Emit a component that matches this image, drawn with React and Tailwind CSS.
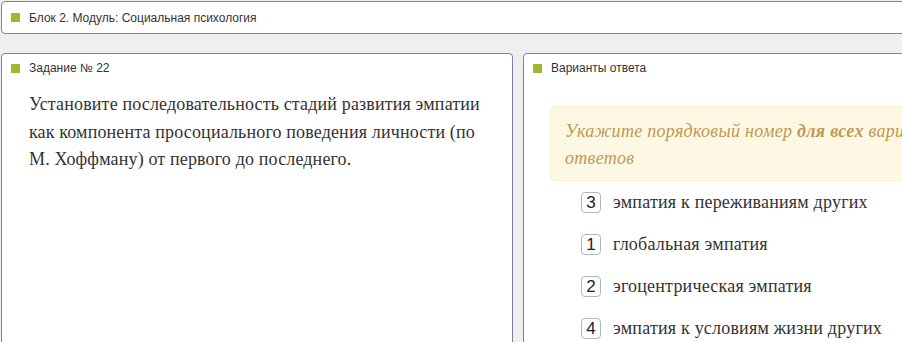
export default function App() {
  const items = [
    ["3", "эмпатия к переживаниям других"],
    ["1", "глобальная эмпатия"],
    ["2", "эгоцентрическая эмпатия"],
    ["4", "эмпатия к условиям жизни других"],
  ];
  const sans = { fontFamily: '"Liberation Sans", Arial, sans-serif' };
  const serif = { fontFamily: '"Liberation Serif", "Times New Roman", serif' };
  return (
    <div className="w-[902px] h-[342px] overflow-hidden bg-[#efefef]">
      <div className="w-[1200px] pl-[1px] pt-[1px]">
        <div className="h-[33px] border border-[#7b80b5] rounded-[4px] bg-white flex items-center pl-[9px]">
          <span className="w-[9px] h-[9px] bg-[#9dba2f] mr-[9px]" />
          <span className="text-[12px] text-[#333] leading-none" style={sans}>Блок 2. Модуль: Социальная психология</span>
        </div>
        <div className="flex gap-[10px] mt-[19px]">
          <div className="w-[512px] shrink-0 h-[320px] border border-[#7b80b5] rounded-[4px] bg-white">
            <div className="flex items-center pl-[9px] h-[28px]">
              <span className="w-[9px] h-[9px] bg-[#9dba2f] mr-[9px]" />
              <span className="text-[12px] text-[#333] leading-none" style={sans}>Задание № 22</span>
            </div>
            <div className="pl-[27px] pr-[20px] pt-[9px] text-[18px] tracking-[0.15px] leading-[27.5px] text-[#333]" style={serif}>
              Установите последовательность стадий развития эмпатии как компонента просоциального поведения личности (по М. Хоффману) от первого до последнего.
            </div>
          </div>
          <div className="w-[600px] shrink-0 h-[320px] border border-[#7b80b5] rounded-[4px] bg-white">
            <div className="flex items-center pl-[9px] h-[28px]">
              <span className="w-[9px] h-[9px] bg-[#9dba2f] mr-[9px]" />
              <span className="text-[12px] text-[#333] leading-none" style={sans}>Варианты ответа</span>
            </div>
            <div className="ml-[26px] mt-[24px] w-[420px] border border-[#fbeed5] rounded-[4px] bg-[#fcf8e3] pl-[14px] pt-[11px] pb-[8px] text-[18px] tracking-[0.3px] leading-[27px] italic text-[#c09853]" style={serif}>
              Укажите порядковый номер <b>для всех</b> вариантов ответов
            </div>
            <div className="pl-[57px] pt-[11px] flex flex-col gap-[21px]">
              {items.map(([n, t]) => (
                <div key={t} className="flex items-center h-[21px]">
                  <span className="w-[20px] h-[21px] border border-[#b5b5b5] rounded-[4px] flex items-center justify-center text-[17px] text-[#222] mr-[12px]" style={sans}>{n}</span>
                  <span className="text-[18px] tracking-[0.2px] text-[#333]" style={serif}>{t}</span>
                </div>
              ))}
            </div>
          </div>
        </div>
      </div>
    </div>
  );
}
